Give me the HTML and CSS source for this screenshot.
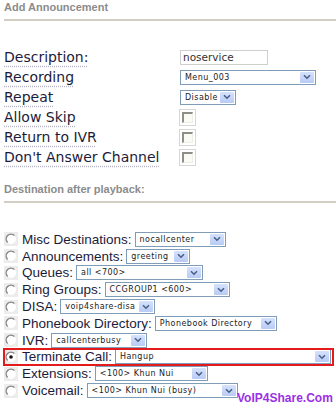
FILE: index.html
```html
<!DOCTYPE html>
<html lang="en">
<head>
  <meta charset="UTF-8">
  <title>Add Announcement</title>
  <link rel="stylesheet" href="styles.css">
</head>
<body>

  <!-- Announcement settings -->
  <div class="section-title">Add Announcement</div>
  <div class="form-grid">
    <span class="lbl">Description:</span>
    <span class="field"><input type="text" class="text-input" value="noservice"></span>

    <span class="lbl">Recording</span>
    <span class="field">
      <span class="select w-recording"><span class="select-text">Menu_003</span><span class="select-btn"><svg width="8" height="6" viewBox="0 0 8 6"><path d="M1 1.2 L4 4.2 L7 1.2" /></svg></span></span>
    </span>

    <span class="lbl">Repeat</span>
    <span class="field">
      <span class="select w-repeat"><span class="select-text">Disable</span><span class="select-btn"><svg width="8" height="6" viewBox="0 0 8 6"><path d="M1 1.2 L4 4.2 L7 1.2" /></svg></span></span>
    </span>

    <span class="lbl">Allow Skip</span>
    <span class="field"><span class="checkbox"><span class="checkbox-inner"></span></span></span>

    <span class="lbl">Return to IVR</span>
    <span class="field"><span class="checkbox"><span class="checkbox-inner"></span></span></span>

    <span class="lbl">Don't Answer Channel</span>
    <span class="field"><span class="checkbox"><span class="checkbox-inner"></span></span></span>
  </div>

  <!-- Destination -->
  <div class="section-title second">Destination after playback:</div>
  <div class="dest-list">
    <div class="dest-row">
      <svg class="radio" width="14" height="14" viewBox="0 0 14 14"><rect width="14" height="14" fill="#ececec"/><circle cx="7" cy="7" r="5" fill="#fff"/><path d="M3.6 10.4 A4.8 4.8 0 0 1 10.4 3.6" /></svg>
      <span class="dest-lbl">Misc Destinations:</span>
      <span class="select w-misc"><span class="select-text">nocallcenter</span><span class="select-btn"><svg width="8" height="6" viewBox="0 0 8 6"><path d="M1 1.2 L4 4.2 L7 1.2" /></svg></span></span>
    </div>
    <div class="dest-row">
      <svg class="radio" width="14" height="14" viewBox="0 0 14 14"><rect width="14" height="14" fill="#ececec"/><circle cx="7" cy="7" r="5" fill="#fff"/><path d="M3.6 10.4 A4.8 4.8 0 0 1 10.4 3.6" /></svg>
      <span class="dest-lbl">Announcements:</span>
      <span class="select w-ann"><span class="select-text">greeting</span><span class="select-btn"><svg width="8" height="6" viewBox="0 0 8 6"><path d="M1 1.2 L4 4.2 L7 1.2" /></svg></span></span>
    </div>
    <div class="dest-row">
      <svg class="radio" width="14" height="14" viewBox="0 0 14 14"><rect width="14" height="14" fill="#ececec"/><circle cx="7" cy="7" r="5" fill="#fff"/><path d="M3.6 10.4 A4.8 4.8 0 0 1 10.4 3.6" /></svg>
      <span class="dest-lbl">Queues:</span>
      <span class="select w-queues"><span class="select-text">all &lt;700&gt;</span><span class="select-btn"><svg width="8" height="6" viewBox="0 0 8 6"><path d="M1 1.2 L4 4.2 L7 1.2" /></svg></span></span>
    </div>
    <div class="dest-row">
      <svg class="radio" width="14" height="14" viewBox="0 0 14 14"><rect width="14" height="14" fill="#ececec"/><circle cx="7" cy="7" r="5" fill="#fff"/><path d="M3.6 10.4 A4.8 4.8 0 0 1 10.4 3.6" /></svg>
      <span class="dest-lbl">Ring Groups:</span>
      <span class="select w-ring"><span class="select-text">CCGROUP1 &lt;600&gt;</span><span class="select-btn"><svg width="8" height="6" viewBox="0 0 8 6"><path d="M1 1.2 L4 4.2 L7 1.2" /></svg></span></span>
    </div>
    <div class="dest-row">
      <svg class="radio" width="14" height="14" viewBox="0 0 14 14"><rect width="14" height="14" fill="#ececec"/><circle cx="7" cy="7" r="5" fill="#fff"/><path d="M3.6 10.4 A4.8 4.8 0 0 1 10.4 3.6" /></svg>
      <span class="dest-lbl">DISA:</span>
      <span class="select w-disa"><span class="select-text">voip4share-disa</span><span class="select-btn"><svg width="8" height="6" viewBox="0 0 8 6"><path d="M1 1.2 L4 4.2 L7 1.2" /></svg></span></span>
    </div>
    <div class="dest-row">
      <svg class="radio" width="14" height="14" viewBox="0 0 14 14"><rect width="14" height="14" fill="#ececec"/><circle cx="7" cy="7" r="5" fill="#fff"/><path d="M3.6 10.4 A4.8 4.8 0 0 1 10.4 3.6" /></svg>
      <span class="dest-lbl">Phonebook Directory:</span>
      <span class="select w-phone"><span class="select-text">Phonebook Directory</span><span class="select-btn"><svg width="8" height="6" viewBox="0 0 8 6"><path d="M1 1.2 L4 4.2 L7 1.2" /></svg></span></span>
    </div>
    <div class="dest-row">
      <svg class="radio" width="14" height="14" viewBox="0 0 14 14"><rect width="14" height="14" fill="#ececec"/><circle cx="7" cy="7" r="5" fill="#fff"/><path d="M3.6 10.4 A4.8 4.8 0 0 1 10.4 3.6" /></svg>
      <span class="dest-lbl">IVR:</span>
      <span class="select w-ivr"><span class="select-text">callcenterbusy</span><span class="select-btn"><svg width="8" height="6" viewBox="0 0 8 6"><path d="M1 1.2 L4 4.2 L7 1.2" /></svg></span></span>
    </div>
    <div class="dest-row selected">
      <svg class="radio" width="14" height="14" viewBox="0 0 14 14"><rect width="14" height="14" fill="#ececec"/><circle cx="7" cy="7" r="5" fill="#fff"/><path d="M3.6 10.4 A4.8 4.8 0 0 1 10.4 3.6" /><circle class="dot" cx="7" cy="7" r="1.8"/></svg>
      <span class="dest-lbl">Terminate Call:</span>
      <span class="select w-fill"><span class="select-text">Hangup</span><span class="select-btn"><svg width="8" height="6" viewBox="0 0 8 6"><path d="M1 1.2 L4 4.2 L7 1.2" /></svg></span></span>
    </div>
    <div class="dest-row">
      <svg class="radio" width="14" height="14" viewBox="0 0 14 14"><rect width="14" height="14" fill="#ececec"/><circle cx="7" cy="7" r="5" fill="#fff"/><path d="M3.6 10.4 A4.8 4.8 0 0 1 10.4 3.6" /></svg>
      <span class="dest-lbl">Extensions:</span>
      <span class="select w-ext"><span class="select-text">&lt;100&gt; Khun Nui</span><span class="select-btn"><svg width="8" height="6" viewBox="0 0 8 6"><path d="M1 1.2 L4 4.2 L7 1.2" /></svg></span></span>
    </div>
    <div class="dest-row">
      <svg class="radio" width="14" height="14" viewBox="0 0 14 14"><rect width="14" height="14" fill="#ececec"/><circle cx="7" cy="7" r="5" fill="#fff"/><path d="M3.6 10.4 A4.8 4.8 0 0 1 10.4 3.6" /></svg>
      <span class="dest-lbl">Voicemail:</span>
      <span class="select w-vm"><span class="select-text">&lt;100&gt; Khun Nui (busy)</span><span class="select-btn"><svg width="8" height="6" viewBox="0 0 8 6"><path d="M1 1.2 L4 4.2 L7 1.2" /></svg></span></span>
    </div>
  </div>

  <div class="watermark">VoIP4Share.Com</div>

</body>
</html>
```

FILE: styles.css
```css
body {
  margin: 0;
  padding: 0 0 0 4px;
  background-color: #fff;
  font-family: "DejaVu Sans", sans-serif;
  position: relative;
  height: 406px;
  overflow: hidden;
}

.section-title {
  font: bold 11px/13px "Liberation Sans", Arial, sans-serif;
  color: #8c8c8c;
  padding-top: 1px;
  height: 21px;
  box-sizing: border-box;
  border-bottom: 2px solid #d2cec3;
}

.section-title.second {
  margin-top: 15px;
}

/* top form */
.form-grid {
  display: grid;
  grid-template-columns: 176px 1fr;
  grid-auto-rows: 20px;
  align-items: center;
  margin-top: 26px;
}

.lbl {
  font-size: 14px;
  line-height: 20px;
  color: #1c1c3a;
  text-decoration: underline dotted #b4b4c4;
  text-underline-offset: 4px;
  white-space: nowrap;
}

.field {
  display: flex;
  align-items: center;
}

.text-input {
  width: 88px;
  height: 15px;
  box-sizing: border-box;
  border: 1px solid #cfcfcf;
  padding: 0 2px;
  margin: 0;
  font: 10.5px "DejaVu Sans", sans-serif;
  color: #333;
  outline: none;
}

.checkbox {
  width: 17px;
  height: 17px;
  box-sizing: border-box;
  border: 1px solid #d6d6d6;
  padding: 2px;
  margin-left: -1px;
}

.checkbox-inner {
  display: block;
  width: 100%;
  height: 100%;
  box-sizing: border-box;
  border-top: 2px solid #8e8e86;
  border-left: 2px solid #8e8e86;
  border-right: 1px solid #eeeee6;
  border-bottom: 1px solid #eeeee6;
  background-color: #fbfbf6;
}

/* fake select boxes */
.select {
  display: inline-flex;
  align-items: center;
  height: 15px;
  box-sizing: border-box;
  border: 1px solid #7f9db9;
  background-color: #fff;
  padding: 1px;
}

.select-text {
  flex: 1;
  font-size: 8px;
  letter-spacing: 0.45px;
  color: #222;
  padding-left: 3px;
  white-space: nowrap;
  overflow: hidden;
}

.select-btn {
  width: 14px;
  height: 11px;
  flex: none;
  display: flex;
  align-items: center;
  justify-content: center;
  background: linear-gradient(#d6e2fd, #b8cbf5);
  border-radius: 1px;
}

.select-btn path {
  fill: none;
  stroke: #4a5f88;
  stroke-width: 1.6;
}

.w-recording { width: 136px; }
.w-repeat { width: 56px; }
.w-misc { width: 91px; }
.w-ann { width: 64px; }
.w-queues { width: 127px; }
.w-ring { width: 125px; }
.w-disa { width: 95px; }
.w-phone { width: 122px; }
.w-ivr { width: 96px; }
.w-ext { width: 113px; }
.w-vm { width: 151px; }
.w-fill { flex: 1; margin-right: 2px; }

/* destination list */
.dest-list {
  margin-top: 28px;
}

.dest-row {
  display: flex;
  align-items: center;
  height: 16.8px;
}

.dest-row.selected {
  margin-right: 3px;
  outline: 2px solid #e31b1b;
  outline-offset: -1px;
}

.radio {
  flex: none;
  margin-right: 4px;
}

.radio path {
  fill: none;
  stroke: #848484;
  stroke-width: 1.4;
}

.radio .dot {
  fill: #111;
}

.dest-lbl {
  font: 13.5px "Liberation Sans", Arial, sans-serif;
  color: #1c1c3a;
  margin-right: 3px;
  white-space: nowrap;
}

.watermark {
  position: absolute;
  left: 237px;
  top: 391px;
  font: bold 12px "Liberation Sans", Arial, sans-serif;
  color: #9b2fe6;
}
```
